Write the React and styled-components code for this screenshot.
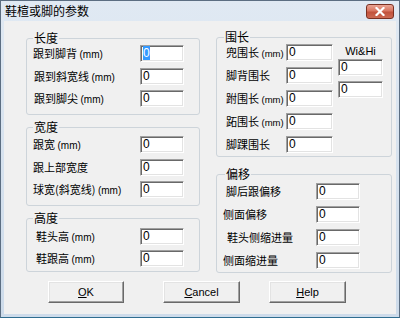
import React from "react";
import styled, { createGlobalStyle } from "styled-components";

const CJK = `"Noto Sans CJK SC", "Microsoft YaHei", sans-serif`;
const LATIN = `"Liberation Sans", Arial, sans-serif`;

const GlobalStyle = createGlobalStyle`
  html, body { margin: 0; padding: 0; }
  body { width: 400px; height: 318px; overflow: hidden; background: #d3dfec; }
`;

const Window = styled.div`
  width: 400px;
  height: 318px;
  box-sizing: border-box;
  display: flex;
  flex-direction: column;
  border: 1px solid #5c6e82;
  border-bottom-color: #2f6d90;
  background: linear-gradient(#e0e9f3, #cddbea);
  padding: 0 3px 3px;
`;

const TitleBar = styled.div`
  height: 20px;
  margin: 0 -3px;
  padding: 0 5px 0 4px;
  display: flex;
  align-items: center;
  justify-content: space-between;
`;

const Title = styled.span`
  font: 12px/20px ${CJK};
  color: #000;
`;

const CloseBtn = styled.div`
  width: 28px;
  height: 15px;
  box-sizing: border-box;
  border: 1px solid #7a3022;
  border-radius: 3px;
  background: linear-gradient(#eaa595, #d87560 45%, #c2523c 55%, #cc6a53);
  display: flex;
  align-items: center;
  justify-content: center;
`;

const Client = styled.div`
  flex: 1;
  background: #f0f0f0;
  display: grid;
  grid-template-columns: 174px 176px;
  column-gap: 16px;
  align-content: start;
  padding: 17px 0 0 22px;
`;

const Column = styled.div`
  display: flex;
  flex-direction: column;
  gap: ${p => p.$gap}px;
  margin-top: ${p => p.$mt || 0}px;
`;

const Group = styled.div`
  border: 1px solid #cdd4da;
  border-radius: 3px;
  display: flex;
  flex-direction: column;
  padding: 0 0 ${p => p.$pb}px 6px;
`;

const Legend = styled.div`
  align-self: flex-start;
  margin: -7px 0 0 ${p => p.$lx || 0}px;
  height: 12px;
  padding: 0 1px;
  background: #f0f0f0;
  font: 12px/12px ${CJK};
  color: #000;
`;

const Body = styled.div`
  display: flex;
  align-items: flex-start;
`;

const Rows = styled.div`
  display: grid;
  grid-template-columns: ${p => p.$lw}px ${p => p.$iw}px;
  grid-auto-rows: 17px;
  row-gap: ${p => p.$gap}px;
  align-items: center;
  margin: ${p => p.$mt}px 0 0 ${p => p.$ml || 0}px;
`;

const Label = styled.div`
  font: 11px/17px ${CJK};
  color: #000;
  white-space: nowrap;
  padding-left: ${p => p.$indent || 0}px;
`;

const Mm = styled.span`
  font: ${p => p.$small ? 9.5 : 10}px ${LATIN};
`;

const Field = styled.div`
  height: 17px;
  box-sizing: border-box;
  border: 1px solid;
  border-color: #a0a0a0 #ffffff #ffffff #a0a0a0;
  box-shadow: inset 1px 1px 0 #696969, inset -1px -1px 0 #e3e3e3;
  background: #fff;
  font: 12px/13px ${LATIN};
  color: #000;
  padding: 1px 0 0 2px;
`;

const Sel = styled.span`
  background: #3399ff;
  color: #fff;
`;

const WiCol = styled.div`
  width: 45px;
  margin-left: 5px;
  display: flex;
  flex-direction: column;
  gap: 5px;
`;

const WiLabel = styled.div`
  height: 11px;
  margin-top: 3px;
  margin-bottom: -3px;
  text-align: center;
  font: 11px/11px ${LATIN};
  color: #000;
`;

const ButtonRow = styled.div`
  grid-column: 1 / -1;
  display: flex;
  margin: 8px 0 0 22px;
`;

const Button = styled.div`
  width: ${p => p.$w}px;
  height: 22px;
  box-sizing: border-box;
  margin-left: ${p => p.$ml || 0}px;
  border: 1px solid;
  border-color: #ffffff #696969 #696969 #ffffff;
  box-shadow: inset -1px -1px 0 #a0a0a0, inset 1px 1px 0 #e3e3e3;
  background: #f0f0f0;
  display: flex;
  align-items: center;
  justify-content: center;
  font: 11px ${LATIN};
  color: #000;
`;

const U = styled.span`
  text-decoration: underline;
`;

const App = () => {
    return (
        <>
            <GlobalStyle />
            <Window>
                <TitleBar>
                    <Title>鞋楦或脚的参数</Title>
                    <CloseBtn>
                        <svg width="10" height="9" viewBox="0 0 10 9">
                            <path d="M1.5 1 L8.5 8 M8.5 1 L1.5 8" stroke="#fff" strokeWidth="2.2" strokeLinecap="square" />
                        </svg>
                    </CloseBtn>
                </TitleBar>
                <Client>
                    <Column $gap={12}>
                        <Group $pb={7}>
                            <Legend>长度</Legend>
                            <Rows $lw={107} $iw={44} $gap={5.5} $mt={1}>
                                <Label>跟到脚背 <Mm>(mm)</Mm></Label>
                                <Field><Sel>0</Sel></Field>
                                <Label $indent={1}>跟到斜宽线 <Mm>(mm)</Mm></Label>
                                <Field>0</Field>
                                <Label $indent={1}>跟到脚尖 <Mm>(mm)</Mm></Label>
                                <Field>0</Field>
                            </Rows>
                        </Group>
                        <Group $pb={7}>
                            <Legend>宽度</Legend>
                            <Rows $lw={107} $iw={44} $gap={5.5} $mt={3}>
                                <Label>跟宽 <Mm>(mm)</Mm></Label>
                                <Field>0</Field>
                                <Label>跟上部宽度</Label>
                                <Field>0</Field>
                                <Label>球宽(斜宽线) <Mm>(mm)</Mm></Label>
                                <Field>0</Field>
                            </Rows>
                        </Group>
                        <Group $pb={4}>
                            <Legend>高度</Legend>
                            <Rows $lw={104} $iw={44} $gap={5} $mt={4} $ml={3}>
                                <Label>鞋头高 <Mm>(mm)</Mm></Label>
                                <Field>0</Field>
                                <Label>鞋跟高 <Mm>(mm)</Mm></Label>
                                <Field>0</Field>
                            </Rows>
                        </Group>
                    </Column>

                    <Column $gap={17} $mt={-1}>
                        <Group $pb={3}>
                            <Legend $lx={1}>围长</Legend>
                            <Body>
                                <Rows $lw={60} $iw={47} $gap={6} $mt={1} $ml={3}>
                                    <Label>兜围长 <Mm $small>(mm)</Mm></Label>
                                    <Field>0</Field>
                                    <Label>脚背围长</Label>
                                    <Field>0</Field>
                                    <Label>跗围长 <Mm $small>(mm)</Mm></Label>
                                    <Field>0</Field>
                                    <Label>跖围长 <Mm $small>(mm)</Mm></Label>
                                    <Field>0</Field>
                                    <Label>脚踝围长</Label>
                                    <Field>0</Field>
                                </Rows>
                                <WiCol>
                                    <WiLabel>Wi&amp;Hi</WiLabel>
                                    <Field>0</Field>
                                    <Field>0</Field>
                                </WiCol>
                            </Body>
                        </Group>
                        <Group $pb={3}>
                            <Legend $lx={2}>偏移</Legend>
                            <Rows $lw={93} $iw={44} $gap={6} $mt={3}>
                                <Label $indent={3}>脚后跟偏移</Label>
                                <Field>0</Field>
                                <Label>侧面偏移</Label>
                                <Field>0</Field>
                                <Label $indent={4}>鞋头侧缩进量</Label>
                                <Field>0</Field>
                                <Label>侧面缩进量</Label>
                                <Field>0</Field>
                            </Rows>
                        </Group>
                    </Column>

                    <ButtonRow>
                        <Button $w={76}><span><U>O</U>K</span></Button>
                        <Button $w={77} $ml={39}><span><U>C</U>ancel</span></Button>
                        <Button $w={77} $ml={29}><span><U>H</U>elp</span></Button>
                    </ButtonRow>
                </Client>
            </Window>
        </>
    );
};

export default App;
